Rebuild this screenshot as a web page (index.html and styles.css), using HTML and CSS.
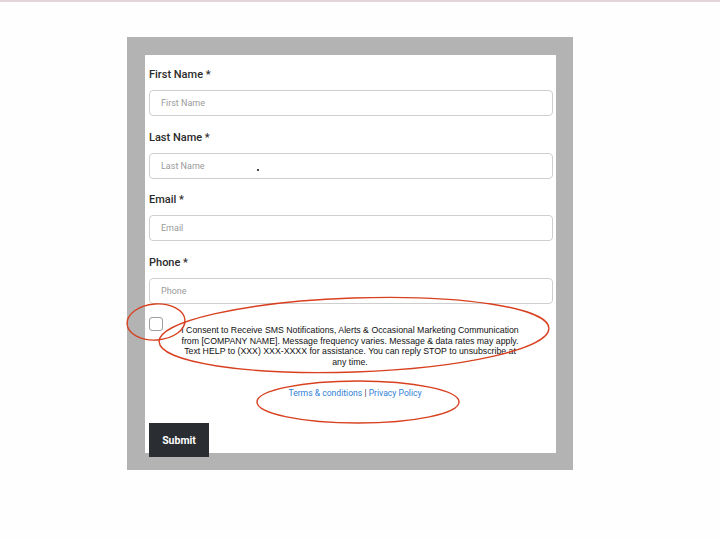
FILE: index.html
```html
<!DOCTYPE html>
<html>
<head>
<meta charset="utf-8">
<link rel="stylesheet" href="styles.css">
</head>
<body>
<div class="topline"></div>
<div class="frame">
  <form class="card">
    <div class="field">
      <label class="label">First Name *</label>
      <input class="input" type="text" placeholder="First Name">
    </div>
    <div class="field">
      <label class="label">Last Name *</label>
      <input class="input" type="text" placeholder="Last Name">
    </div>
    <div class="field">
      <label class="label">Email *</label>
      <input class="input" type="text" placeholder="Email">
    </div>
    <div class="field">
      <label class="label">Phone *</label>
      <input class="input" type="text" placeholder="Phone">
    </div>
    <div class="consent">
      <span class="check"></span>
      <p class="consent-text">I Consent to Receive SMS Notifications, Alerts &amp; Occasional Marketing Communication from [COMPANY NAME]. Message frequency varies. Message &amp; data rates may apply. Text HELP to (XXX) XXX-XXXX for assistance. You can reply STOP to unsubscribe at any time.</p>
    </div>
    <p class="links"><a href="#">Terms &amp; conditions</a> | <a href="#">Privacy Policy</a></p>
    <button class="submit" type="button">Submit</button>
  </form>
</div>
<svg class="marks" width="720" height="539" viewBox="0 0 720 539">
  <ellipse cx="156" cy="322" rx="29" ry="18" transform="rotate(-4 156 322)"/>
  <ellipse cx="354" cy="335" rx="195" ry="37" transform="rotate(-2 354 335)"/>
  <ellipse cx="358" cy="402" rx="101" ry="21"/>
  <circle class="dot" cx="258" cy="170" r="1.1"/>
</svg>
</body>
</html>
```
FILE: styles.css
```css
html, body {
  margin: 0;
  padding: 0;
  background: #fefefe;
}
body {
  width: 720px;
  height: 539px;
  overflow: hidden;
  position: relative;
  font-family: Roboto, "Noto Sans", sans-serif;
}
.topline {
  height: 2px;
  background: #e5d3da;
}
.frame {
  margin: 35px 0 0 127px;
  width: 411px;
  padding: 18px 17px 17px 18px;
  background: #b3b3b3;
}
.card {
  display: block;
  height: 398px;
  background: #ffffff;
  padding: 12px 3px 0 4px;
  box-sizing: border-box;
  margin: 0;
}
.field {
  margin-bottom: 13.5px;
}
.label {
  display: block;
  font-size: 11px;
  font-weight: 500;
  line-height: 16px;
  color: #2b2b2b;
  margin-bottom: 7px;
}
.input {
  display: block;
  width: 404px;
  height: 26px;
  box-sizing: border-box;
  border: 1px solid #cfcfcf;
  border-radius: 4px;
  padding: 0 11px;
  font-family: Roboto, "Noto Sans", sans-serif;
  font-size: 9px;
  color: #333;
  background: #fff;
  outline: none;
}
.input::placeholder {
  color: #9a9a9a;
}
.consent {
  display: flex;
  align-items: flex-start;
}
.check {
  flex: none;
  width: 14px;
  height: 14px;
  box-sizing: border-box;
  border: 1px solid #9e9e9e;
  border-radius: 3px;
  background: #fff;
}
.consent-text {
  flex: none;
  width: 338px;
  margin: 8px 0 0 18px;
  font-family: "Liberation Sans", Arial, sans-serif;
  font-size: 8.75px;
  line-height: 10.6px;
  text-align: center;
  color: #111;
}
.links {
  margin: 20px 0 0 0;
  text-align: center;
  font-family: Roboto, "Liberation Sans", sans-serif;
  font-size: 8.6px;
  line-height: 12px;
  color: #444;
  padding-left: 8px;
}
.links a {
  color: #2f80d8;
  text-decoration: none;
}
.submit {
  display: block;
  margin-top: 24px;
  width: 60px;
  height: 34px;
  border: none;
  border-radius: 0;
  background: #2a2e33;
  color: #fff;
  font-family: Roboto, "Liberation Sans", sans-serif;
  font-weight: 700;
  font-size: 10.5px;
  padding: 0;
}
.marks {
  position: absolute;
  left: 0;
  top: 0;
  pointer-events: none;
}
.marks ellipse {
  fill: none;
  stroke: #d8401f;
  stroke-width: 1.4;
}
.marks .dot {
  fill: #222;
}
```
